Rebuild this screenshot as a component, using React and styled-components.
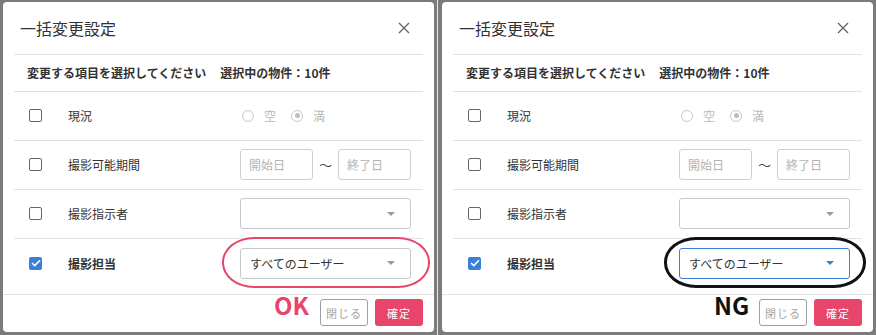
import React from 'react';
import styled, { createGlobalStyle } from 'styled-components';

const GlobalStyle = createGlobalStyle`
  html, body {
    margin: 0;
    padding: 0;
  }
  body {
    font-family: "Noto Sans CJK JP", "Noto Sans", sans-serif;
    background: #7b7b7b;
  }
  * {
    box-sizing: border-box;
  }
`

const tones = {
  ok: '#e8456b',
  ng: '#111111',
}

export default function App () {
  return (
    <>
      <GlobalStyle />
      <Page>
        <Shot side="left">
          <BulkDialog tone="ok" />
        </Shot>
        <Seam />
        <Shot side="right">
          <BulkDialog tone="ng" />
        </Shot>
      </Page>
    </>
  )
}

function BulkDialog (props) {
  const { tone } = props
  const focused = tone === 'ng'

  return (
    <Dialog>
      <Header>
        <Title>一括変更設定</Title>
        <Close aria-label="閉じる">
          <svg width="12" height="12" viewBox="0 0 12 12">
            <path d="M1 1 L11 11 M11 1 L1 11" stroke="#666" strokeWidth="1.4" fill="none" />
          </svg>
        </Close>
      </Header>

      <Body>
        <Lead>
          <span>変更する項目を選択してください</span>
          <span>選択中の物件：10件</span>
        </Lead>

        <Row>
          <Check />
          <Label>現況</Label>
          <RadioGroup>
            <RadioItem><Radio /> 空</RadioItem>
            <RadioItem><Radio checked /> 満</RadioItem>
          </RadioGroup>
        </Row>

        <Row>
          <Check />
          <Label>撮影可能期間</Label>
          <DateRange>
            <Field>開始日</Field>
            <Tilde>〜</Tilde>
            <Field>終了日</Field>
          </DateRange>
        </Row>

        <Row>
          <Check />
          <Label>撮影指示者</Label>
          <Select>
            <span></span>
            <Caret />
          </Select>
        </Row>

        <Row last>
          <Check checked>
            <svg width="10" height="8" viewBox="0 0 10 8">
              <path d="M1 4 L3.8 6.6 L9 1.2" stroke="#fff" strokeWidth="1.6" fill="none" />
            </svg>
          </Check>
          <Label strong>撮影担当</Label>
          <Select focused={focused}>
            <span>すべてのユーザー</span>
            <Caret focused={focused} />
          </Select>
        </Row>
      </Body>

      <Footer>
        <GhostButton>閉じる</GhostButton>
        <PrimaryButton>確定</PrimaryButton>
      </Footer>

      <Ring tone={tone} />
      <Mark tone={tone}>{tone === 'ok' ? 'OK' : 'NG'}</Mark>
    </Dialog>
  )
}

//styled components

const Page = styled.div`
  width: 876px;
  height: 335px;
  display: flex;
  background: #7b7b7b;
  overflow: hidden;
`

const Shot = styled.div`
  height: 335px;
  width: ${props => props.side === 'left' ? '437px' : '438px'};
  padding: ${props => props.side === 'left' ? '2px 3px 3px 3px' : '2px 3px 3px 4px'};
`

const Seam = styled.div`
  width: 1px;
  height: 335px;
  background: #e6e6e6;
`

const Dialog = styled.div`
  position: relative;
  width: 431px;
  height: 330px;
  background: #fff;
  border-radius: 4px;
  display: flex;
  flex-direction: column;
`

const Header = styled.div`
  height: 53px;
  display: flex;
  align-items: center;
  justify-content: space-between;
  padding: 0 24px 0 17px;
`

const Title = styled.h1`
  margin: 0;
  font-size: 16px;
  font-weight: 400;
  color: #333;
`

const Close = styled.span`
  display: flex;
  align-items: center;
  width: 12px;
  height: 12px;
`

const Body = styled.div`
  margin: 0 11px;
  padding-bottom: 6px;
`

const Lead = styled.div`
  height: 38px;
  display: flex;
  align-items: center;
  gap: 14px;
  padding-left: 13px;
  border-top: 1px solid #e0e0e0;
  border-bottom: 1px solid #e0e0e0;
  font-size: 12px;
  font-weight: 700;
  color: #333;
`

const Row = styled.div`
  height: 49px;
  display: grid;
  grid-template-columns: 39px 1fr 171px;
  align-items: center;
  padding: 0 12px 0 15px;
  border-bottom: ${props => props.last ? 'none' : '1px solid #e0e0e0'};
`

const Check = styled.span`
  width: 13px;
  height: 13px;
  border-radius: 2px;
  border: ${props => props.checked ? 'none' : '1.5px solid #666'};
  background: ${props => props.checked ? '#3a7fdc' : '#fff'};
  display: flex;
  align-items: center;
  justify-content: center;
`

const Label = styled.span`
  font-size: 12px;
  color: #333;
  font-weight: ${props => props.strong ? 700 : 400};
`

const RadioGroup = styled.div`
  display: flex;
  align-items: center;
  gap: 15px;
  padding-left: 2px;
`

const RadioItem = styled.span`
  display: flex;
  align-items: center;
  gap: 10px;
  font-size: 12px;
  color: #b8b8b8;
`

const Radio = styled.span`
  position: relative;
  width: 12px;
  height: 12px;
  border: 1px solid #c9c9c9;
  border-radius: 50%;

  &::after {
    content: "";
    display: ${props => props.checked ? 'block' : 'none'};
    position: absolute;
    left: 2.5px;
    top: 2.5px;
    width: 5px;
    height: 5px;
    border-radius: 50%;
    background: #bdbdbd;
  }
`

const DateRange = styled.div`
  display: flex;
  align-items: center;
  justify-content: space-between;
`

const Field = styled.div`
  width: 73px;
  height: 31px;
  border: 1px solid #cfcfcf;
  border-radius: 3px;
  display: flex;
  align-items: center;
  padding-left: 8px;
  font-size: 12px;
  color: #b3b3b3;
`

const Tilde = styled.span`
  font-size: 13px;
  color: #444;
`

const Select = styled.div`
  height: 31px;
  border: 1px solid ${props => props.focused ? '#3a7fdc' : '#c8c8c8'};
  border-radius: 3px;
  display: flex;
  align-items: center;
  justify-content: space-between;
  padding: 0 15px 0 9px;
  font-size: 12px;
  color: #333;
`

const Caret = styled.span`
  width: 0;
  height: 0;
  border-left: 4px solid transparent;
  border-right: 4px solid transparent;
  border-top: 4px solid ${props => props.focused ? '#3a7fdc' : '#9a9a9a'};
`

const Footer = styled.div`
  margin-top: auto;
  height: 39px;
  border-top: 1px solid #e0e0e0;
  display: flex;
  align-items: center;
  justify-content: flex-end;
  gap: 7px;
  padding: 0 11px 1px 0;
`

const GhostButton = styled.button`
  width: 48px;
  height: 27px;
  border: 1px solid #9e9e9e;
  border-radius: 3px;
  background: #fff;
  color: #a3a3a3;
  font-family: inherit;
  font-size: 11px;
  letter-spacing: 1px;
  padding: 0;
`

const PrimaryButton = styled.button`
  width: 48px;
  height: 27px;
  border: none;
  border-radius: 3px;
  background: #e8456b;
  color: #fff;
  font-family: inherit;
  font-size: 11px;
  letter-spacing: 1px;
  padding: 0;
`

const Ring = styled.span`
  position: absolute;
  left: ${props => props.tone === 'ok' ? '219px' : '222px'};
  top: 235px;
  width: ${props => props.tone === 'ok' ? '208px' : '202px'};
  height: 51px;
  border: ${props => props.tone === 'ok' ? '2.5px' : '3px'} solid ${props => tones[props.tone]};
  border-radius: 32px / 25px;
  pointer-events: none;
`

const Mark = styled.span`
  position: absolute;
  left: ${props => props.tone === 'ok' ? '271px' : '272px'};
  top: 291px;
  font-size: 24px;
  line-height: 24px;
  font-weight: 700;
  color: ${props => tones[props.tone]};
`
